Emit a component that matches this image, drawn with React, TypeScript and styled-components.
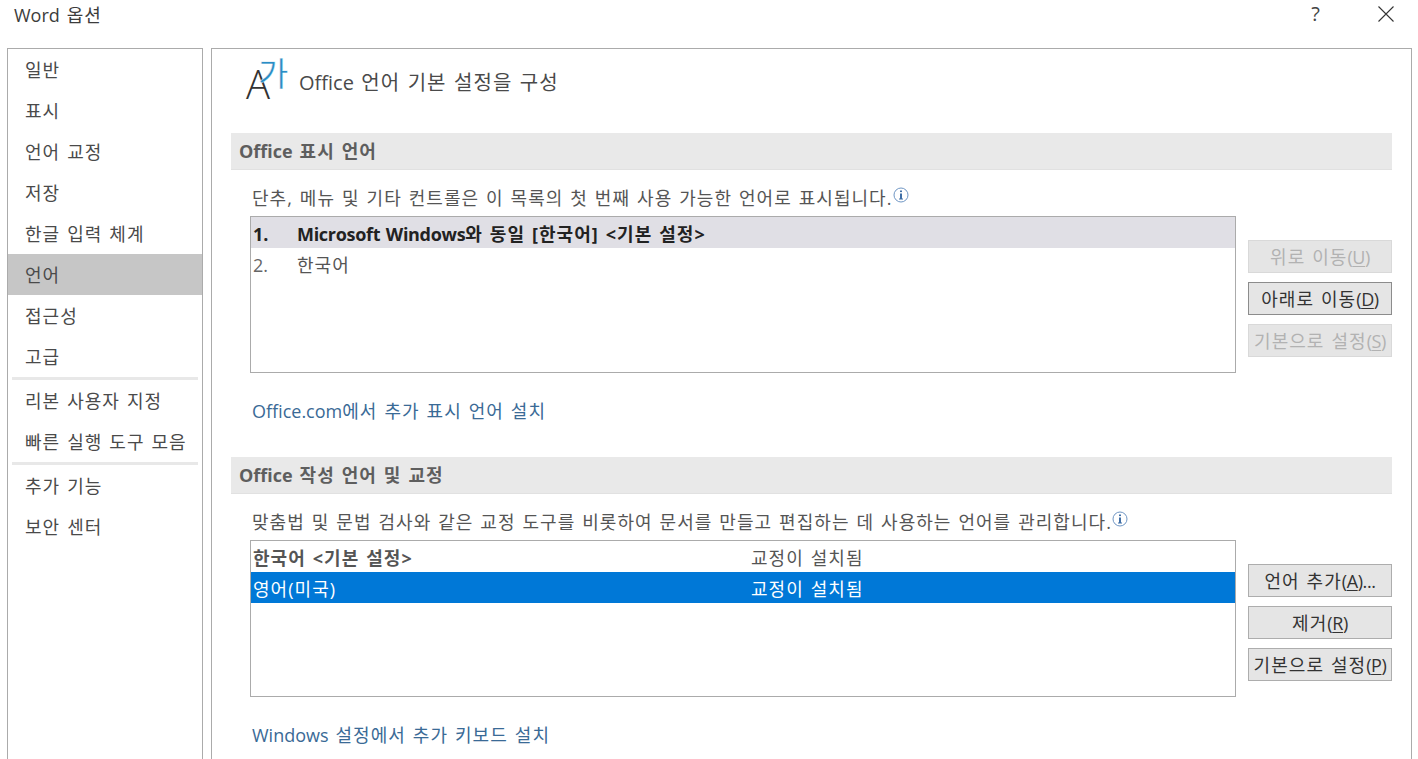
import styled, { createGlobalStyle } from 'styled-components'

const FONT = `"Open Sans", "Noto Sans CJK KR", sans-serif`

const Global = createGlobalStyle`
  html, body {
    margin: 0;
    height: 759px;
    overflow: hidden;
    background: #fff;
  }
  body {
    font-family: ${FONT};
    color: #4a4a4a;
    letter-spacing: 1.05px;
    word-spacing: 1.2px;
  }
`

const Window = styled.div`
  width: 1418px;
  height: 759px;
  overflow: hidden;
  display: flex;
  flex-direction: column;
`

const TitleBar = styled.div`
  height: 48px;
  flex: none;
  display: flex;
  justify-content: space-between;
  padding: 3px 24px 0 14px;
  box-sizing: border-box;
`

const Title = styled.div`
  font-size: 18px;
  line-height: 24px;
  color: #3c3c3c;
`

const TitleButtons = styled.div`
  display: flex;
  align-items: flex-start;
  gap: 58px;
`

const Help = styled.span`
  font-size: 20px;
  line-height: 21px;
  letter-spacing: 0;
  color: #444;
`

const CloseIcon = styled.svg`
  width: 16px;
  height: 16px;
  margin-top: 3px;
`

const Body = styled.div`
  display: flex;
  align-items: flex-start;
  gap: 8px;
  padding-left: 7px;
`

const Sidebar = styled.nav`
  width: 196px;
  height: 760px;
  flex: none;
  box-sizing: border-box;
  border: 1px solid #ababab;
`

const NavItem = styled.div<{ $active?: boolean }>`
  height: 41px;
  line-height: 43px;
  padding-left: 17px;
  font-size: 18px;
  color: #4a4a4a;
  background: ${p => (p.$active ? '#c6c6c6' : 'transparent')};
`

const NavDivider = styled.div`
  height: 3px;
  margin: 0 4px;
  background: #e8e8e8;
`

const Panel = styled.main`
  width: 1201px;
  height: 760px;
  flex: none;
  box-sizing: border-box;
  border: 1px solid #ababab;
  padding: 0 19px;
`

const Header = styled.div`
  height: 84px;
  box-sizing: border-box;
  padding: 3px 0 0 14px;
  display: flex;
  align-items: flex-start;
`

const Logo = styled.div`
  width: 54px;
  height: 54px;
  flex: none;
  position: relative;
`

const LogoLatin = styled.span`
  position: absolute;
  left: 1px;
  bottom: -4px;
  font: 300 40px/52px "Open Sans", sans-serif;
  letter-spacing: 0;
  color: #333;
`

const LogoHangul = styled.span`
  position: absolute;
  left: 13px;
  top: 0;
  font: 400 33px/40px "Noto Sans CJK KR", sans-serif;
  letter-spacing: 0;
  color: #2a8dc5;
  -webkit-text-stroke: 0.4px #fff;
`

const Heading = styled.h1`
  margin: 16px 0 0;
  font-size: 20px;
  font-weight: 400;
  line-height: 30px;
  color: #4a4a4a;
`

const Latin = styled.span`
  letter-spacing: 0;
`

const StrongLatin = styled(Latin)`
  letter-spacing: -0.3px;
`

const SectionBar = styled.h2<{ $gap: number }>`
  margin: ${p => p.$gap}px 0 0;
  height: 37px;
  box-sizing: border-box;
  padding-left: 8px;
  font-size: 18px;
  font-weight: 700;
  line-height: 37px;
  color: #5e5e5e;
  background: #e9e9e9;
  border-bottom: 1px solid #e1e1e1;
`

const Description = styled.div`
  display: flex;
  align-items: center;
  height: 46px;
  padding: 8px 0 0 21px;
  box-sizing: border-box;
  font-size: 18px;
  color: #555;
`

const InfoIcon = styled.svg`
  width: 16px;
  height: 16px;
  margin: -4px 0 0 0;
  flex: none;
`

const Content = styled.div`
  display: flex;
  align-items: flex-start;
  padding-left: 19px;
  gap: 12px;
`

const ListBox = styled.div`
  width: 986px;
  height: 157px;
  flex: none;
  box-sizing: border-box;
  border: 1px solid #ababab;
`

const ListRow = styled.div<{ $tone?: 'current' | 'selected' }>`
  display: flex;
  height: 31px;
  line-height: 34px;
  padding-left: 2px;
  font-size: 18px;
  color: ${p => (p.$tone === 'selected' ? '#fff' : '#555')};
  background: ${p =>
    p.$tone === 'selected' ? '#0078d7' : p.$tone === 'current' ? '#e0dfe5' : 'transparent'};
`

const RowNumber = styled.span<{ $strong?: boolean }>`
  width: 44px;
  flex: none;
  letter-spacing: 0;
  font-weight: ${p => (p.$strong ? 700 : 400)};
  color: ${p => (p.$strong ? '#222' : '#666')};
`

const RowLabel = styled.span<{ $strong?: boolean; $dark?: boolean }>`
  font-weight: ${p => (p.$strong ? 700 : 400)};
  color: ${p => (p.$dark ? '#222' : 'inherit')};
`

const LangCell = styled.span<{ $strong?: boolean }>`
  width: 498px;
  flex: none;
  font-weight: ${p => (p.$strong ? 700 : 400)};
`

const Buttons = styled.div`
  display: flex;
  flex-direction: column;
  gap: 9px;
  padding-top: 24px;
`

const Button = styled.button<{ $primary?: boolean }>`
  width: 144px;
  height: 33px;
  padding: 0;
  font-family: ${FONT};
  font-size: 18px;
  line-height: 30px;
  letter-spacing: 1.05px;
  word-spacing: 1.2px;
  white-space: nowrap;
  background: #e5e5e5;
  color: ${p => (p.disabled ? '#b2b2b2' : '#333')};
  border: 1px solid ${p => (p.disabled ? '#d9d9d9' : p.$primary ? '#8c8c8c' : '#adadad')};
`

const LinkLine = styled.a`
  display: block;
  margin: 23px 0 0 21px;
  font-size: 18px;
  line-height: 31px;
  height: 30px;
  color: #3a6a96;
`

const Key = styled.span`
  letter-spacing: -0.4px;
  u {
    text-underline-offset: 2px;
  }
`

const Info = () => (
  <InfoIcon viewBox="0 0 16 16">
    <circle cx="8" cy="8" r="7" fill="#fff" stroke="#6f96c4" strokeWidth="1" />
    <rect x="7" y="6.5" width="2" height="5.5" fill="#3f6ea6" />
    <rect x="6" y="11.5" width="4" height="1" fill="#3f6ea6" />
    <rect x="7" y="3.5" width="2" height="1.6" fill="#3f6ea6" />
  </InfoIcon>
)

const navGroups = [
  ['일반', '표시', '언어 교정', '저장', '한글 입력 체계', '언어', '접근성', '고급'],
  ['리본 사용자 지정', '빠른 실행 도구 모음'],
  ['추가 기능', '보안 센터'],
]

const Label = ({ text, hot, tail = '' }: { text: string; hot: string; tail?: string }) => (
  <>
    {text}
    <Key>
      (<u>{hot}</u>){tail}
    </Key>
  </>
)

export default function App() {
  return (
    <Window>
      <Global />
      <TitleBar>
        <Title>
          <Latin>Word</Latin> 옵션
        </Title>
        <TitleButtons>
          <Help>?</Help>
          <CloseIcon viewBox="0 0 16 16">
            <path d="M0.5 0.5 L15.5 15.5 M15.5 0.5 L0.5 15.5" stroke="#333" strokeWidth="1.1" fill="none" />
          </CloseIcon>
        </TitleButtons>
      </TitleBar>
      <Body>
        <Sidebar>
          {navGroups.map((group, i) => (
            <div key={i}>
              {i > 0 && <NavDivider />}
              {group.map(item => (
                <NavItem key={item} $active={item === '언어'}>
                  {item}
                </NavItem>
              ))}
            </div>
          ))}
        </Sidebar>
        <Panel>
          <Header>
            <Logo>
              <LogoLatin>A</LogoLatin>
              <LogoHangul>가</LogoHangul>
            </Logo>
            <Heading>
              <Latin>Office</Latin> 언어 기본 설정을 구성
            </Heading>
          </Header>
          <SectionBar $gap={0}>
            <Latin>Office</Latin> 표시 언어
          </SectionBar>
          <Description>
            단추, 메뉴 및 기타 컨트롤은 이 목록의 첫 번째 사용 가능한 언어로 표시됩니다.
            <Info />
          </Description>
          <Content>
            <ListBox>
              <ListRow $tone="current">
                <RowNumber $strong>1.</RowNumber>
                <RowLabel $strong $dark>
                  <StrongLatin>Microsoft Windows</StrongLatin>와 동일 [한국어] &lt;기본 설정&gt;
                </RowLabel>
              </ListRow>
              <ListRow>
                <RowNumber>2.</RowNumber>
                <RowLabel>한국어</RowLabel>
              </ListRow>
            </ListBox>
            <Buttons>
              <Button disabled>
                <Label text="위로 이동" hot="U" />
              </Button>
              <Button $primary>
                <Label text="아래로 이동" hot="D" />
              </Button>
              <Button disabled>
                <Label text="기본으로 설정" hot="S" />
              </Button>
            </Buttons>
          </Content>
          <LinkLine>
            <Latin>Office.com</Latin>에서 추가 표시 언어 설치
          </LinkLine>
          <SectionBar $gap={31}>
            <Latin>Office</Latin> 작성 언어 및 교정
          </SectionBar>
          <Description>
            맞춤법 및 문법 검사와 같은 교정 도구를 비롯하여 문서를 만들고 편집하는 데 사용하는 언어를 관리합니다.
            <Info />
          </Description>
          <Content>
            <ListBox>
              <ListRow>
                <LangCell $strong>한국어 &lt;기본 설정&gt;</LangCell>
                <RowLabel>교정이 설치됨</RowLabel>
              </ListRow>
              <ListRow $tone="selected">
                <LangCell>영어(미국)</LangCell>
                <RowLabel>교정이 설치됨</RowLabel>
              </ListRow>
            </ListBox>
            <Buttons>
              <Button>
                <Label text="언어 추가" hot="A" tail="..." />
              </Button>
              <Button>
                <Label text="제거" hot="R" />
              </Button>
              <Button>
                <Label text="기본으로 설정" hot="P" />
              </Button>
            </Buttons>
          </Content>
          <LinkLine>
            <Latin>Windows</Latin> 설정에서 추가 키보드 설치
          </LinkLine>
        </Panel>
      </Body>
    </Window>
  )
}
